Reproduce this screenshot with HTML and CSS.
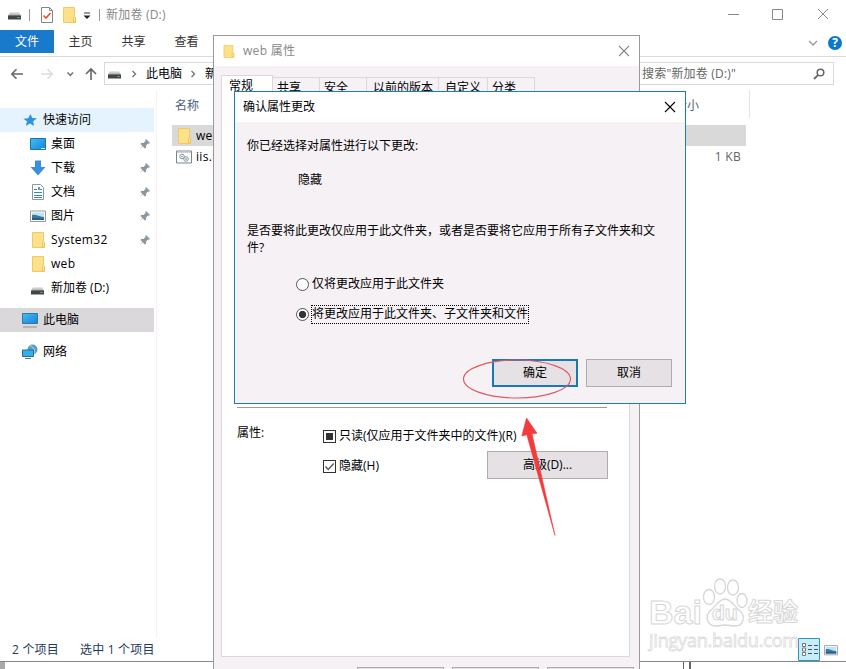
FILE: index.html
```html
<!DOCTYPE html>
<html lang="zh-CN">
<head>
    <meta charset="UTF-8">
    <title>新加卷 (D:)</title>
    <link rel="stylesheet" href="styles.css">
</head>
<body>
    <!-- shared icons -->
    <svg class="defs" width="0" height="0">
        <linearGradient id="blue" x1="0" y1="0" x2="1" y2="1">
            <stop offset="0" stop-color="#43bdf5"/><stop offset="1" stop-color="#1683d8"/>
        </linearGradient>
        <linearGradient id="silver" x1="0" y1="0" x2="0" y2="1">
            <stop offset="0" stop-color="#eee"/><stop offset="1" stop-color="#999"/>
        </linearGradient>
        <symbol id="drive" viewBox="0 0 16 16">
            <path d="M3 5h9l2 4H1z" fill="url(#silver)"/>
            <path d="M1 8.500h13v4H1z" fill="#444"/>
            <path d="M10.500 10h2v1h-2z" fill="#4bd08b"/>
        </symbol>
        <symbol id="folder" viewBox="0 0 16 16">
            <path d="M2.500 .5h11v9l1 1v5h-12z" fill="#fce18a" stroke="#efcb63"/>
            <path d="M12.500 15v-4.500l1-1 1 1V15z" fill="#fbe9a8" stroke="#e5bd4f" stroke-width=".8"/>
        </symbol>
        <symbol id="pin" viewBox="0 0 12 12">
            <path d="M7 1l4 4-1 .7-1-.2-2 2 .2 2L6 10.500 3.900 8.400.8 11.300l2.700-3.400L1.500 6l1-1.200 2 .2 2-2L6.300 2z" fill="#8b969e"/>
        </symbol>
        <symbol id="picture" viewBox="0 0 16 16">
            <path d="M.5 3h15v10.500H.5z" fill="#fff" stroke="#999"/>
            <path d="M2 4.500h12v7.500H2z" fill="#bfe3f5"/>
            <path d="M2 7c4-1 7 2 12 2v3H2z" fill="#397e94"/>
            <path d="M2 10c4 0 8 0 12 .7V12H2z" fill="#285a96"/>
        </symbol>
        <symbol id="close" viewBox="0 0 12 12">
            <path d="M1 1l10 10M11 1L1 11" fill="none" stroke="currentColor" stroke-width="1.100"/>
        </symbol>
        <symbol id="chevron" viewBox="0 0 8 8">
            <path d="M2.500 1l3 3-3 3" fill="none" stroke="#777" stroke-width="1.400"/>
        </symbol>
    </svg>

    <div class="explorer">
        <div class="titlebar">
            <svg class="icon"><use href="#drive"/></svg>
            <span class="separator"></span>
            <svg class="icon check-doc" viewBox="0 0 16 16">
                <path d="M2.500.5h8l3 3v12h-11z" fill="#fff" stroke="#858585"/>
                <path d="M10.500.5v3h3" fill="none" stroke="#858585"/>
                <path d="M4.500 8.500l2.500 2.500 4.500-5" fill="none" stroke="#e2542b" stroke-width="1.600"/>
            </svg>
            <svg class="icon title-folder"><use href="#folder"/></svg>
            <svg class="dropdown" viewBox="0 0 8 8"><path d="M1 1h6" stroke="#333"/><path d="M.5 3.500h7L4 7z" fill="#222"/></svg>
            <span class="separator"></span>
            <span class="title">新加卷 (D:)</span>
            <svg class="window-buttons" viewBox="0 0 106 16">
                <g fill="none" stroke="#888">
                    <path d="M1 8.500h11M45.500 3.500h10v10h-10zM91 3l10 10M101 3L91 13"/>
                </g>
            </svg>
        </div>
        <div class="ribbon">
            <span class="ribbon-tab file">文件</span>
            <span class="ribbon-tab">主页</span>
            <span class="ribbon-tab">共享</span>
            <span class="ribbon-tab">查看</span>
            <svg class="ribbon-chevron" viewBox="0 0 10 8"><path d="M1 2l4 4 4-4" fill="none" stroke="#999" stroke-width="1.300"/></svg>
            <span class="help">?</span>
        </div>
        <div class="navbar">
            <svg class="nav-icons" viewBox="0 0 104 16">
                <g fill="none" stroke-width="1.600">
                    <path d="M23 8H12M16.500 3.300L11.800 8l4.700 4.700" stroke="#666"/>
                    <path d="M41 8h11M47.500 3.300L52.200 8l-4.700 4.700" stroke="#ddd"/>
                    <path d="M67.500 6.500l2.800 2.800 2.800-2.800" stroke="#777"/>
                    <path d="M91 14V3M86 8l5-5 5 5" stroke="#666"/>
                </g>
            </svg>
            <div class="address">
                <svg class="icon"><use href="#drive"/></svg>
                <svg class="crumb"><use href="#chevron"/></svg>
                <span>此电脑</span>
                <svg class="crumb"><use href="#chevron"/></svg>
                <span>新加卷 (D:)</span>
            </div>
            <div class="search">
                <span>搜索"新加卷 (D:)"</span>
                <svg class="magnifier" viewBox="0 0 12 12"><circle cx="7.500" cy="4.500" r="3.300" fill="none" stroke="#666" stroke-width="1.500"/><path d="M5.200 6.800L1 11" stroke="#666" stroke-width="1.800"/></svg>
            </div>
        </div>
        <div class="main">
            <div class="sidebar">
                <div class="side-row group quick">
                    <svg class="icon" viewBox="0 0 16 16"><path d="M8.600 2l1.600 4 4.800.3-3.800 2.900L12 14l-4-2.500L3.800 14 5 9.200 1.300 6.700l4.800-.4z" fill="#2e94df"/></svg>
                    <span>快速访问</span>
                </div>
                <div class="side-row">
                    <svg class="icon" viewBox="0 0 16 16"><path d="M.5 2.500h15v11H.5z" fill="url(#blue)" stroke="#1976b5"/><path d="M11 12.500h4" stroke="#c8efff"/></svg>
                    <span>桌面</span><svg class="pin"><use href="#pin"/></svg>
                </div>
                <div class="side-row">
                    <svg class="icon" viewBox="0 0 16 16"><path d="M5 .5h6V7h4.500L8 15.500.5 7H5z" fill="#3b8ede"/></svg>
                    <span>下载</span><svg class="pin"><use href="#pin"/></svg>
                </div>
                <div class="side-row">
                    <svg class="icon" viewBox="0 0 16 16"><path d="M2.500.5h8l3 3v12h-11z" fill="#fff" stroke="#8b979d"/><path d="M4 5.500h3M8 5.500h4M4 8.500h8M4 11.500h8M4 13.500h8" stroke="#3e89a8"/><path d="M8 3h2v3H8z" fill="#49a6cc"/></svg>
                    <span>文档</span><svg class="pin"><use href="#pin"/></svg>
                </div>
                <div class="side-row">
                    <svg class="icon"><use href="#picture"/></svg>
                    <span>图片</span><svg class="pin"><use href="#pin"/></svg>
                </div>
                <div class="side-row">
                    <svg class="icon"><use href="#folder"/></svg>
                    <span class="latin">System32</span><svg class="pin"><use href="#pin"/></svg>
                </div>
                <div class="side-row">
                    <svg class="icon"><use href="#folder"/></svg>
                    <span class="latin">web</span>
                </div>
                <div class="side-row">
                    <svg class="icon low"><use href="#drive"/></svg>
                    <span>新加卷 (D:)</span>
                </div>
                <div class="side-row group active">
                    <svg class="icon" viewBox="0 0 16 16"><path d="M.5 1.500h15v10H.5z" fill="url(#blue)" stroke="#33789f"/><path d="M1 15h14" stroke="#8a9195"/></svg>
                    <span>此电脑</span>
                </div>
                <div class="side-row group">
                    <svg class="icon" viewBox="0 0 16 16"><circle cx="10.500" cy="5.500" r="5" fill="#5b9fc4"/><path d="M8 1.500c4 2 5 5 4 8" fill="none" stroke="#b5dceb"/><path d="M.5 6h11v6.500H.5z" fill="#35b0ec" stroke="#1e6e9e"/><path d="M3 14.500h6" stroke="#678"/></svg>
                    <span>网络</span>
                </div>
            </div>
            <div class="files">
                <div class="file-header"><span>名称</span><span class="size">大小</span></div>
                <div class="file-row selected">
                    <svg class="icon"><use href="#folder"/></svg>
                    <span class="latin">web</span>
                </div>
                <div class="file-row">
                    <svg class="icon" viewBox="0 0 16 16"><path d="M.5 2h15v12H.5z" fill="#fff" stroke="#7c858a"/><path d="M1 3.500h14" stroke="#ccd3d8"/><g fill="none" stroke="#8296a5"><circle cx="6" cy="7.500" r="2.300"/><circle cx="10" cy="10" r="2.300"/><circle cx="6" cy="7.500" r=".5"/><circle cx="10" cy="10" r=".5"/></g></svg>
                    <span class="latin">iis.bat</span>
                    <span class="size">1 KB</span>
                </div>
            </div>
        </div>
        <div class="statusbar">
            <span>2 个项目</span>
            <span>选中 1 个项目</span>
            <svg class="view details" viewBox="0 0 22 23"><path d="M.5.5h21v22H.5z" fill="#c9edf8" stroke="#2a96b8"/><g fill="#fff" stroke="#777"><path d="M4.500 5.500h3v3h-3zM4.500 10h3v3h-3zM4.500 14.500h3v3h-3z"/></g><path d="M10 7.500h4M16 7.500h4M10 11.500h4M16 11.500h4M10 15.500h4M16 15.500h4" stroke="#456"/></svg>
            <svg class="view thumbs"><use href="#picture"/></svg>
        </div>
    </div>
    <div class="behind"><span class="edge"></span><span class="gap"></span></div>

    <div class="watermark">
        <div class="brand">
            <span>Bai</span>
            <svg class="paw" viewBox="0 0 46 50">
                <g fill="#fff" stroke="#d6d6d6" stroke-width="1.300">
                    <ellipse cx="7" cy="19" rx="5.500" ry="7.500"/><ellipse cx="18" cy="8.500" rx="5.500" ry="7.500"/>
                    <ellipse cx="31" cy="9.500" rx="5.500" ry="7.500"/><ellipse cx="40" cy="22.500" rx="5" ry="7"/>
                    <path d="M23 21c-6 0-9 7-14 11-7 6-4 16 5 16 4 0 5-1 9-1s6 1 10 1c9 0 11-10 4-16-5-4-8-11-14-11z"/>
                </g>
            </svg>
            <span class="du">du</span>
            <span class="jingyan">经验</span>
        </div>
        <div class="site">jingyan.baidu.com</div>
    </div>

    <div class="properties">
        <div class="dialog-title muted">
            <svg class="small-folder"><use href="#folder"/></svg>
            <span>web 属性</span>
            <svg class="close"><use href="#close"/></svg>
        </div>
        <div class="tabs">
            <span class="tab current">常规</span>
            <span class="tab">共享</span>
            <span class="tab">安全</span>
            <span class="tab wide">以前的版本</span>
            <span class="tab medium">自定义</span>
            <span class="tab">分类</span>
        </div>
        <div class="panel">
            <hr>
            <div class="attributes">
                <span class="attr-label">属性:</span>
                <div class="attr-options">
                    <label><span class="checkbox mixed"></span>只读(仅应用于文件夹中的文件)(R)</label>
                    <label><span class="checkbox"><svg viewBox="0 0 11 11"><path d="M1.500 5.500l2.700 3L9.700 2.500" fill="none" stroke="#555" stroke-width="1.300"/></svg></span>隐藏(H)</label>
                </div>
                <button class="advanced">高级(D)...</button>
            </div>
        </div>
        <div class="panel-buttons"><button></button><button></button><button></button></div>
    </div>

    <div class="confirm">
        <div class="dialog-title">
            <span>确认属性更改</span>
            <svg class="close"><use href="#close"/></svg>
        </div>
        <div class="confirm-body">
            <p>你已经选择对属性进行以下更改:</p>
            <p class="change">隐藏</p>
            <p class="question">是否要将此更改仅应用于此文件夹，或者是否要将它应用于所有子文件夹和文件?</p>
            <label class="option"><span class="radio"></span><span class="option-text">仅将更改应用于此文件夹</span></label>
            <label class="option"><span class="radio checked"></span><span class="option-text focused">将更改应用于此文件夹、子文件夹和文件</span></label>
            <div class="confirm-buttons">
                <button class="primary">确定</button>
                <button>取消</button>
            </div>
        </div>
    </div>

    <svg class="annotation" viewBox="0 0 110 190">
        <ellipse cx="56" cy="24" rx="53.500" ry="19" fill="none" stroke="#dc5b62" stroke-width="1.200"/>
        <path d="M65.500 63l10.500 15.300-5 .5L94 180.500 65.800 79.800l-5 1.200z" fill="#f33a3c" stroke="#f33a3c" stroke-width=".6"/>
    </svg>
</body>
</html>
```

FILE: styles.css
```css
* {
    box-sizing: border-box;
}
body {
    margin: 0;
    width: 846px;
    height: 669px;
    overflow: hidden;
    position: relative;
    background: #fff;
    color: #000;
    font: 12px/16px "Open Sans", "Noto Sans CJK SC", sans-serif;
    white-space: nowrap;
}
svg {
    display: block;
    flex: none;
}
p {
    margin: 0;
}
button {
    height: 28px;
    padding: 0;
    border: 1px solid #adadad;
    background: #e5e1e5;
    color: #000;
    font: inherit;
}
.defs {
    position: absolute;
}
.icon {
    width: 16px;
    height: 16px;
}
.latin {
    letter-spacing: 0.3px;
}

/* explorer window */
.explorer {
    display: flex;
    flex-direction: column;
    height: 662px;
    border-bottom: 1px solid #888;
}
.titlebar {
    display: flex;
    align-items: center;
    height: 30px;
    padding-left: 7px;
    color: #888;
}
.separator {
    width: 1px;
    height: 12px;
    margin-left: 6px;
    background: #999;
}
.check-doc {
    margin-left: 9px;
}
.title-folder {
    margin-left: 6px;
}
.dropdown {
    width: 8px;
    height: 8px;
    margin: 2px 2px 0 6px;
}
.title {
    margin-left: 6px;
    letter-spacing: 0.2px;
}
.window-buttons {
    width: 106px;
    height: 16px;
    margin: 0 13px 2px auto;
}
.ribbon {
    display: flex;
    height: 27px;
    border-bottom: 1px solid #dadada;
    color: #333;
}
.ribbon-tab {
    width: 53px;
    height: 24px;
    line-height: 24px;
    text-align: center;
}
.ribbon-tab.file {
    width: 54px;
    height: 23px;
    background: #1979ca;
    color: #fff;
}
.ribbon-chevron {
    width: 10px;
    height: 8px;
    margin: 9px 10px 0 auto;
}
.help {
    width: 14px;
    height: 14px;
    margin: 6px 4px 0 0;
    border-radius: 50%;
    background: #0b78cc;
    color: #fff;
    font-weight: bold;
    line-height: 14px;
    text-align: center;
}
.navbar {
    display: flex;
    align-items: center;
    height: 33px;
}
.nav-icons {
    width: 104px;
    height: 16px;
}
.address,
.search {
    display: flex;
    align-items: center;
    height: 23px;
    border: 1px solid #d9d9d9;
}
.address {
    width: 520px;
    padding-left: 2px;
}
.crumb {
    width: 8px;
    height: 8px;
    margin: 0 8px 0 7px;
}
.search {
    flex: 1;
    justify-content: space-between;
    margin: 0 12px 0 6px;
    padding: 0 8px 0 11px;
    color: #666;
    letter-spacing: 0.2px;
}
.magnifier {
    width: 12px;
    height: 12px;
}
.main {
    display: flex;
    flex: 1;
}
.sidebar {
    width: 157px;
    padding: 18px 2px 0 0;
    border-right: 1px solid #f3f3f3;
}
.side-row {
    display: flex;
    align-items: center;
    gap: 5px;
    height: 24px;
    padding: 0 3px 0 30px;
}
.side-row.group {
    margin-bottom: 8px;
    padding-left: 22px;
}
.side-row.quick {
    margin-bottom: 0;
    background: #e5f3fe;
}
.side-row.active {
    margin-top: 8px;
    background: #dad8db;
}
.low {
    margin-top: 4px;
}
.pin {
    width: 12px;
    height: 12px;
    margin-left: auto;
}
.files {
    width: 593px;
    padding-left: 15px;
}
.file-header {
    display: flex;
    justify-content: space-between;
    align-items: center;
    height: 28px;
    margin-bottom: 7px;
    padding: 3px 50px 0 3px;
    border-right: 1px solid #e3e3e3;
    color: #4c607a;
}
.file-row {
    display: flex;
    align-items: center;
    gap: 4px;
    width: 574px;
    height: 21px;
    padding: 0 5px 0 4px;
}
.file-row.selected {
    background: #d9d9d9;
}
.file-row .size {
    margin-left: auto;
    color: #666;
    letter-spacing: 0.3px;
}
.statusbar {
    display: flex;
    align-items: center;
    gap: 21px;
    height: 23px;
    padding-left: 12px;
    color: #1e395b;
    letter-spacing: 0.2px;
}
.view.details {
    width: 22px;
    height: 23px;
    margin-left: auto;
}
.view.thumbs {
    width: 14px;
    height: 14px;
    margin: 0 8px 0 -17px;
}
.behind {
    display: flex;
    justify-content: space-between;
    height: 7px;
    padding-right: 155px;
}
.edge {
    width: 5px;
    background: #aaa;
}
.gap {
    width: 8px;
    border: solid #666;
    border-width: 0 2px 0 1px;
}

/* dialogs */
.properties {
    position: absolute;
    left: 213px;
    top: 35px;
    display: flex;
    flex-direction: column;
    width: 427px;
    height: 634px;
    border: 1px solid #999;
    border-bottom: 0;
    background: #f5f1f5;
    overflow: hidden;
}
.properties > div {
    flex: none;
}
.dialog-title {
    display: flex;
    align-items: center;
    height: 30px;
    padding: 0 9px 0 8px;
    background: #fff;
}
.muted {
    color: #888;
}
.small-folder {
    width: 13px;
    height: 13px;
    margin-right: 8px;
}
.muted span {
    letter-spacing: 0.3px;
}
.close {
    width: 12px;
    height: 12px;
    margin-left: auto;
}
.tabs {
    display: flex;
    align-items: flex-end;
    height: 32px;
    padding-left: 7px;
}
.tab {
    width: 47px;
    height: 21px;
    padding: 2px 0 0 4px;
    border: 1px solid #dcd7dc;
    border-width: 1px 1px 0 0;
}
.tab.current {
    width: 52px;
    height: 23px;
    padding-left: 7px;
    border-left-width: 1px;
    background: #fff;
}
.tab.wide {
    width: 72px;
    padding-left: 6px;
}
.tab.medium {
    width: 49px;
    padding-left: 6px;
}
.panel {
    width: 409px;
    height: 559px;
    margin-left: 7px;
    padding: 309px 21px 0 15px;
    border: 1px solid #dcd7dc;
    border-top: 0;
    background: #fff;
}
hr {
    height: 1px;
    margin: 0 1px 0 0;
    border: 0;
    background: #999;
}
.attributes {
    display: grid;
    grid-template-columns: 86px 163px 121px;
}
.attr-label {
    padding-top: 17px;
}
.attr-options {
    display: grid;
    align-content: start;
    gap: 14px;
    padding-top: 20px;
}
.attr-options label,
.option {
    display: flex;
    align-items: center;
    height: 16px;
}
.checkbox {
    display: grid;
    place-items: center;
    width: 13px;
    height: 13px;
    margin-right: 3px;
    border: 1px solid #333;
    flex: none;
}
.checkbox svg {
    width: 11px;
    height: 11px;
}
.mixed::before {
    content: "";
    width: 7px;
    height: 7px;
    background: #333;
}
.advanced {
    margin-top: 43px;
    margin-left: 1px;
    width: 121px;
}
.panel-buttons {
    display: flex;
    gap: 8px;
    margin: 10px 0 0 143px;
}
.panel-buttons button {
    width: 87px;
}
.confirm {
    position: absolute;
    left: 234px;
    top: 91px;
    width: 452px;
    height: 313px;
    border: 1px solid #1b7fa6;
    background: #f5f1f5;
}
.confirm-body {
    padding: 16px 13px 0 12px;
}
.change {
    margin: 18px 0 34px 51px;
}
.question {
    width: 410px;
    line-height: 17px;
    white-space: normal;
}
.option {
    margin: 20px 0 0 49px;
}
.option + .option {
    margin-top: 14px;
}
.radio {
    width: 13px;
    height: 13px;
    margin-right: 2px;
    border: 1px solid #555;
    border-radius: 50%;
    background: #fff;
}
.radio.checked {
    background: radial-gradient(circle, #333 3.3px, #fff 4px);
}
.option-text {
    padding: 1px;
}
.focused {
    height: 19px;
    padding: 0;
    border: 1px dotted #000;
}
.confirm-buttons {
    display: flex;
    justify-content: flex-end;
    gap: 8px;
    margin-top: 37px;
}
.confirm-buttons button {
    width: 86px;
}
.confirm-buttons .primary {
    border: 2px solid #1979b8;
}

/* overlays */
.annotation {
    position: absolute;
    left: 461px;
    top: 355px;
    width: 110px;
    height: 190px;
}
.watermark {
    position: absolute;
    left: 649px;
    top: 577px;
    width: 150px;
    color: #fff;
    font-family: "Liberation Sans", "Noto Sans CJK SC", sans-serif;
    font-weight: bold;
    -webkit-text-stroke: 1px #d6d6d6;
}
.brand {
    display: flex;
    align-items: flex-end;
    height: 51px;
    font-size: 34px;
    line-height: 32px;
}
.paw {
    width: 46px;
    height: 50px;
}
.du {
    width: 26px;
    margin: 0 10px 3px -36px;
    font-size: 21px;
    line-height: 24px;
}
.jingyan {
    font-size: 25px;
}
.site {
    font: 18px/24px "Open Sans", sans-serif;
    letter-spacing: -0.2px;
    -webkit-text-stroke: 0.8px #dcdcdc;
}
```
